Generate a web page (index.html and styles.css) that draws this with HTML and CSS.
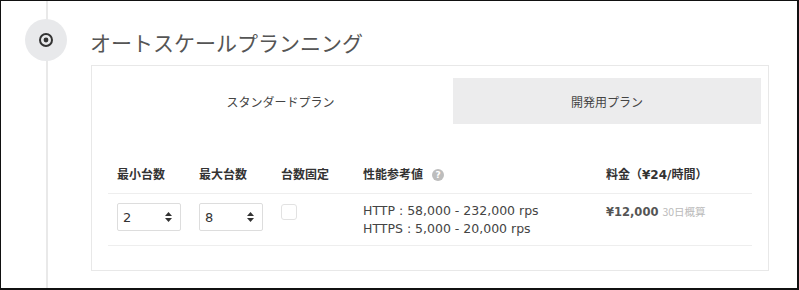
FILE: index.html
```html
<!DOCTYPE html>
<html lang="ja">
<head>
    <meta charset="UTF-8">
    <meta name="viewport" content="width=device-width, initial-scale=1.0">
    <title>オートスケールプランニング</title>
    <link rel="stylesheet" href="styles.css">
</head>
<body>
    <div class="frame">
        <div class="rail">
            <div class="step-icon">
                <svg width="16" height="16" viewBox="0 0 16 16">
                    <circle cx="8" cy="8" r="6" fill="none" stroke="#333" stroke-width="2"></circle>
                    <circle cx="8" cy="8" r="2.4" fill="#333"></circle>
                </svg>
            </div>
        </div>

        <div class="step-body">
            <h2 class="step-title">オートスケールプランニング</h2>

            <div class="panel">
                <div class="tabs">
                    <div class="tab active">スタンダードプラン</div>
                    <div class="tab">開発用プラン</div>
                </div>

                <div class="plan-table">
                    <div class="th">最小台数</div>
                    <div class="th">最大台数</div>
                    <div class="th">台数固定</div>
                    <div class="th">性能参考値 <span class="help">?</span></div>
                    <div class="th">料金（¥24/時間）</div>

                    <div class="td">
                        <div class="sel">
                            <span>2</span>
                            <svg width="7" height="10" viewBox="0 0 7 10"><path d="M3.5 0 7 4H0z M3.5 10 0 6h7z" fill="#333"></path></svg>
                        </div>
                    </div>
                    <div class="td">
                        <div class="sel">
                            <span>8</span>
                            <svg width="7" height="10" viewBox="0 0 7 10"><path d="M3.5 0 7 4H0z M3.5 10 0 6h7z" fill="#333"></path></svg>
                        </div>
                    </div>
                    <div class="td"><span class="check"></span></div>
                    <div class="td perf">
                        HTTP : 58,000 - 232,000 rps<br>
                        HTTPS : 5,000 - 20,000 rps
                    </div>
                    <div class="td price">¥12,000 <span class="note">30日概算</span></div>
                </div>
            </div>
        </div>
    </div>
</body>
</html>
```

FILE: styles.css
```css
body {
    margin: 0;
    font-family: "DejaVu Sans", "Noto Sans CJK JP", sans-serif;
    color: #444;
    background: #fff;
}

.frame {
    box-sizing: border-box;
    width: 799px;
    height: 290px;
    border-top: 1px solid #111;
    border-left: 1px solid #111;
    border-right: 2px solid #111;
    border-bottom: 2px solid #111;
    display: flex;
}

/* timeline column */
.rail {
    width: 90px;
    flex-shrink: 0;
    display: flex;
    flex-direction: column;
    align-items: center;
    padding-top: 18px;
    background: linear-gradient(#e9e9e9, #e9e9e9) no-repeat 45px 0 / 2px 100%;
}

.step-icon {
    width: 42px;
    height: 42px;
    border-radius: 50%;
    background: #e8e9eb;
    display: flex;
    align-items: center;
    justify-content: center;
}

.step-body {
    flex: 1;
    padding-right: 28px;
}

.step-title {
    margin: 26px 0 8px -1px;
    font-family: "Noto Sans CJK JP", sans-serif;
    font-size: 21px;
    font-weight: 400;
    line-height: 30px;
    color: #555;
}

.panel {
    border: 1px solid #e8e8e8;
    height: 206px;
    box-sizing: border-box;
    padding: 12px 7px 0 16px;
}

.tabs {
    display: flex;
    height: 46px;
}

.tab {
    display: flex;
    align-items: center;
    justify-content: center;
    font-family: "Noto Sans CJK JP", sans-serif;
    font-size: 12px;
    color: #444;
    flex: 1;
    background: #ececed;
}

.tab.active {
    flex: 0 0 345px;
    background: #fff;
}

.plan-table {
    margin: 32px 9px 0 0;
    display: grid;
    grid-template-columns: 82px 82px 82px 243px 1fr;
    padding: 0 9px;
    border-bottom: 1px solid #eee;
}

.th {
    font-size: 12px;
    font-weight: 700;
    color: #333;
    line-height: 16px;
    padding: 11px 0 10px;
    display: flex;
    align-items: center;
    gap: 9px;
}

.td {
    height: 51px;
    box-sizing: border-box;
    padding-top: 9px;
    font-size: 12.5px;
}

.th, .td {
    border-bottom: 1px solid #eee;
    margin: 0 -9px;
    padding-left: 9px;
    padding-right: 9px;
}

.td:nth-child(n+6) {
    border-bottom: none;
}

.help {
    display: inline-flex;
    align-items: center;
    justify-content: center;
    width: 12px;
    height: 12px;
    border-radius: 50%;
    background: #bdbdbd;
    color: #fff;
    font-size: 9px;
    font-weight: 700;
}

.sel {
    box-sizing: border-box;
    width: 64px;
    height: 28px;
    border: 1px solid #ddd;
    border-radius: 2px;
    display: flex;
    align-items: center;
    justify-content: space-between;
    padding: 0 8px 0 5px;
    font-size: 13px;
    color: #333;
}

.check {
    display: block;
    width: 16px;
    height: 16px;
    box-sizing: border-box;
    border: 1px solid #e2e2e2;
    border-radius: 3px;
    margin-top: 1px;
}

.td.perf {
    padding-top: 1px;
    line-height: 18px;
    color: #444;
    display: flex;
    align-items: center;
}

.td.price {
    font-size: 11.5px;
    font-weight: 700;
    color: #555;
    padding-top: 10px;
}

.note {
    font-family: "Noto Sans CJK JP", sans-serif;
    font-size: 10.5px;
    font-weight: 400;
    color: #bbb;
}
```
